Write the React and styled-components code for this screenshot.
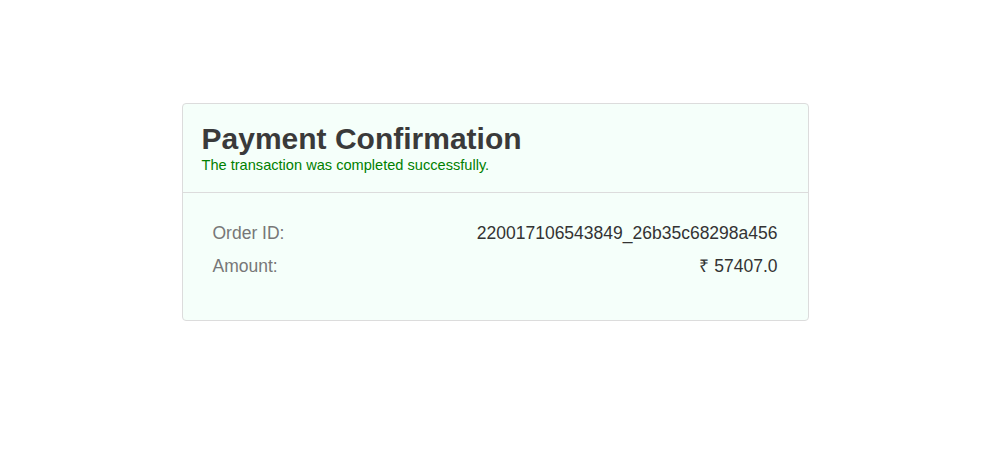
import React from "react";
import styled, { createGlobalStyle } from "styled-components";

const GlobalStyle = createGlobalStyle`
  html, body {
    margin: 0;
    padding: 0;
    background: #ffffff;
    font-family: "Liberation Sans", Arial, sans-serif;
  }
`;

const Page = styled.div`
  display: flex;
  justify-content: center;
  padding-top: 103px;
  padding-left: 3px;
`;

const Card = styled.div`
  width: 625px;
  background-color: #f5fffa;
  border: 1px solid #dcdcdc;
  border-radius: 4px;
`;

const Header = styled.div`
  padding: 17px 19px 19px;
  border-bottom: 1px solid #dcdcdc;
`;

const Title = styled.h1`
  margin: 0;
  font-size: 30px;
  line-height: 36px;
  font-weight: bold;
  color: #3a3a3a;
`;

const Subtitle = styled.p`
  margin: 0;
  font-size: 14.6px;
  line-height: 16px;
  color: #008000;
`;

const Body = styled.div`
  padding: 30px 30px 44px;
  display: flex;
  flex-direction: column;
  gap: 13px;
`;

const Row = styled.div`
  display: flex;
  justify-content: space-between;
  align-items: center;
  font-size: 17.5px;
  line-height: 20px;
`;

const Label = styled.span`
  color: ${(p) => (p.$muted ? "#777777" : "#333333")};
`;

export default function App() {
  const rows = [
    ["Order ID:", "220017106543849_26b35c68298a456"],
    ["Amount:", "₹ 57407.0"],
  ];
  return (
    <>
      <GlobalStyle />
      <Page>
        <Card>
          <Header>
            <Title>Payment Confirmation</Title>
            <Subtitle>The transaction was completed successfully.</Subtitle>
          </Header>
          <Body>
            {rows.map(([k, v]) => (
              <Row key={k}>
                <Label $muted>{k}</Label>
                <Label>{v}</Label>
              </Row>
            ))}
          </Body>
        </Card>
      </Page>
    </>
  );
}
